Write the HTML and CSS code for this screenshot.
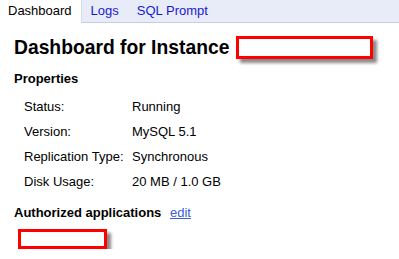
FILE: index.html
```html
<!DOCTYPE html>
<html lang="en">
<head>
  <meta charset="UTF-8">
  <title>Dashboard</title>
  <link rel="stylesheet" href="styles.css">
</head>
<body>
  <div class="tabs">
    <div class="tab active">Dashboard</div>
    <div class="tab">Logs</div>
    <div class="tab">SQL Prompt</div>
  </div>
  <div class="content">
    <div class="title">
      <h1>Dashboard for Instance</h1>
      <div class="redact wide"></div>
    </div>
    <h2>Properties</h2>
    <div class="props">
      <div class="label">Status:</div><div>Running</div>
      <div class="label">Version:</div><div>MySQL 5.1</div>
      <div class="label">Replication Type:</div><div>Synchronous</div>
      <div class="label">Disk Usage:</div><div>20 MB / 1.0 GB</div>
    </div>
    <h2 class="apps">Authorized applications <a href="#">edit</a></h2>
    <div class="redact small"></div>
  </div>
</body>
</html>
```
FILE: styles.css
```css
body {
  margin: 0;
  font-family: 'Liberation Sans', Arial, sans-serif;
  font-size: 13px;
  color: #000;
  background: #fff;
}

.tabs {
  display: flex;
  height: 22px;
  background: #e8ecf8;
  border-bottom: 1px solid #c5cde0;
}

.tab {
  padding: 0 9px 0 9px;
  line-height: 22px;
  color: #1a1acc;
}

.tab.active {
  padding-left: 8px;
  background: #fff;
  color: #000;
  border-right: 1px solid #d6dbe8;
  height: 23px;
}

.content {
  padding-left: 14px;
}

.title {
  display: flex;
  align-items: center;
  margin-top: 13px;
  gap: 7px;
}

h1 {
  margin: 0;
  font-size: 19.3px;
  font-weight: bold;
}

.redact {
  box-sizing: border-box;
  border: 3px solid #f00;
  background: #fff;
  box-shadow: 4px 4px 3px #8a8a8a;
}

.redact.wide {
  width: 137px;
  height: 23px;
}

.redact.small {
  width: 89px;
  height: 20px;
  margin: 9px 0 0 4px;
}

h2 {
  margin: 12px 0 0 0;
  font-size: 13px;
  line-height: 15px;
  font-weight: bold;
}

.props {
  display: grid;
  grid-template-columns: 108px auto;
  grid-auto-rows: 25px;
  align-items: center;
  margin: 8px 0 0 10px;
}

h2.apps {
  margin-top: 11px;
}

h2.apps a {
  margin-left: 5px;
  color: #3a5fd8;
  font-weight: normal;
  text-decoration: underline;
}
```
